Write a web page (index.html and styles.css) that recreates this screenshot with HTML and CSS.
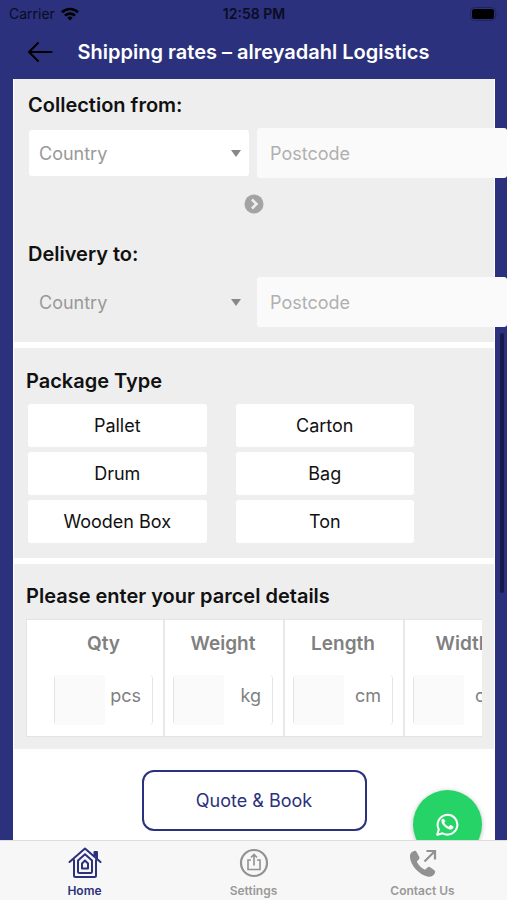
FILE: index.html
```html
<!DOCTYPE html>
<html lang="en">
<head>
<meta charset="utf-8">
<meta name="viewport" content="width=device-width, initial-scale=1">
<title>Shipping rates – alreyadahl Logistics</title>
<link rel="stylesheet" href="styles.css">
</head>
<body>
<header class="top">
  <div class="status">
    <span class="carrier">Carrier
      <svg width="18" height="14" viewBox="0 0 18 14" aria-hidden="true"><g fill="none" stroke="#000" stroke-width="2.6"><path d="M1 5.2a11.5 11.5 0 0 1 16 0"/><path d="M4 8.6a7.2 7.2 0 0 1 10 0"/></g><path d="M9 13.6 6.2 10.8a4 4 0 0 1 5.6 0z"/></svg>
    </span>
    <span class="clock">12:58 PM</span>
    <svg class="battery" width="29" height="14" viewBox="0 0 29 14" aria-hidden="true"><rect x=".5" y=".5" width="25" height="13" rx="4" fill="none" stroke="#20245c"/><rect x="2" y="2" width="22" height="10" rx="2.5"/><path d="M27 4.8q1.6 2.2 0 4.4z" fill="#20245c"/></svg>
  </div>
  <div class="titlebar">
    <button class="back" type="button" aria-label="Back">
      <svg width="26" height="22" viewBox="0 0 26 22" aria-hidden="true"><path d="M24.500 11H2M11 2 2 11l9 9" fill="none" stroke="#000" stroke-width="2" stroke-linecap="round" stroke-linejoin="round"/></svg>
    </button>
    <h1>Shipping rates – alreyadahl Logistics</h1>
  </div>
</header>

<main class="view">
  <form class="card">
    <section class="block route">
      <h2>Collection from:</h2>
      <div class="place">
        <div class="picker">
          <select aria-label="Collection country"><option>Country</option></select>
          <svg width="10" height="7" viewBox="0 0 10 7" aria-hidden="true"><path d="M0 0h10L5 7z" fill="#888"/></svg>
        </div>
        <input class="postcode" type="text" placeholder="Postcode" aria-label="Collection postcode">
      </div>
      <div class="direction">
        <svg width="20" height="20" viewBox="0 0 20 20" aria-hidden="true"><circle cx="10" cy="10" r="9.500" fill="#a3a3a3"/><path d="m8 5.500 4.500 4.500L8 14.500" fill="none" stroke="#eee" stroke-width="2.600"/></svg>
      </div>
      <h2>Delivery to:</h2>
      <div class="place">
        <div class="picker plain">
          <select aria-label="Delivery country"><option>Country</option></select>
          <svg width="10" height="7" viewBox="0 0 10 7" aria-hidden="true"><path d="M0 0h10L5 7z" fill="#888"/></svg>
        </div>
        <input class="postcode" type="text" placeholder="Postcode" aria-label="Delivery postcode">
      </div>
    </section>

    <section class="block package">
      <h2>Package Type</h2>
      <div class="types">
        <button type="button">Pallet</button>
        <button type="button">Carton</button>
        <button type="button">Drum</button>
        <button type="button">Bag</button>
        <button type="button">Wooden Box</button>
        <button type="button">Ton</button>
      </div>
    </section>

    <section class="block parcel">
      <h2>Please enter your parcel details</h2>
      <div class="scroller">
        <table>
          <thead>
            <tr><th id="qty">Qty</th><th id="weight">Weight</th><th id="length">Length</th><th id="width">Width</th></tr>
          </thead>
          <tbody>
            <tr>
              <td><div class="measure"><input type="text" aria-labelledby="qty"><span>pcs</span></div></td>
              <td><div class="measure"><input type="text" aria-labelledby="weight"><span>kg</span></div></td>
              <td><div class="measure"><input type="text" aria-labelledby="length"><span>cm</span></div></td>
              <td><div class="measure"><input type="text" aria-labelledby="width"><span>cm</span></div></td>
            </tr>
          </tbody>
        </table>
      </div>
    </section>

    <div class="submit"><button type="button">Quote &amp; Book</button></div>
  </form>
  <span class="scrollbar"></span>
  <a class="whatsapp" href="#chat" aria-label="WhatsApp">
    <svg width="23" height="23" viewBox="0 0 24 24" aria-hidden="true"><path d="M1.300 22.700 2.900 17A10.300 10.300 0 1 1 7 21.200z" fill="none" stroke="#fff" stroke-width="2.200" stroke-linejoin="round"/><path d="M8.300 6.400c-.3-.5-.6-.5-1-.5-.5 0-1.600.8-1.600 2.600 0 1.500 1 3 1.800 4 1.400 1.900 3.500 3.700 6 4.500 2.300.8 4.500-.3 4.700-2.500 0-.4 0-.6-.4-.8l-2.400-1.100c-.4-.2-.7-.1-.9.200l-1 1.200c-.2.200-.4.300-.8.100-1.800-.8-3-1.900-4-3.600-.2-.3-.1-.5.100-.7l.8-1c.2-.3.2-.5.100-.8z" fill="#fff"/></svg>
  </a>
</main>

<nav class="tabs">
  <a class="active" href="#home">
    <svg width="34" height="32" viewBox="0 0 34 32" aria-hidden="true"><g fill="none" stroke="#2b317c" stroke-width="2" stroke-linejoin="round" stroke-linecap="round"><path d="M1.500 15 17 1.500 32.500 15"/><path d="M6 13v15.500Q6 30 7.500 30h19q1.500 0 1.500-1.500V13"/><path d="M26.500 8.500V5H29v6" fill="#2b317c"/><path d="M10 24.500V13.500l7-6.200 7 6.200v11q0 1.500-1.500 1.500h-11q-1.500 0-1.500-1.500z"/><path d="M14 21.500v-5L17 13.500l3 3v5z"/></g></svg>
    <span>Home</span>
  </a>
  <a href="#settings">
    <svg width="30" height="32" viewBox="0 0 30 32" aria-hidden="true"><g fill="none" stroke="#929292"><circle cx="15" cy="16" r="13" stroke-width="2.200"/><path d="M12 13H9v9.500h12V13h-3M15 18.500V8M12 10.500 15 7.500l3 3" stroke-width="1.600"/></g></svg>
    <span>Settings</span>
  </a>
  <a href="#contact">
    <svg width="30" height="32" viewBox="0 0 30 32" aria-hidden="true"><path d="M6 4c-3 1-4.500 3-4 6.500C3 19 11 27.500 19.500 29.500c3.500.8 6-.6 7.300-3.300.7-1.500.4-2.400-.8-3.300l-3.500-2.500c-1.300-.9-2.300-.8-3.300.3l-1.500 1.500c-.5.500-1 .4-1.600.1-2.800-1.500-5.300-4-6.900-6.800-.4-.7-.3-1.200.2-1.700l1.400-1.400c.8-.9.900-1.800.2-2.900L8.800 5.200C8 4 7.200 3.600 6 4z" fill="#929292"/><path d="M16.500 14.500 26.500 4.500M18.500 4H27v8.500" fill="none" stroke="#929292" stroke-width="2.200"/></svg>
    <span>Contact Us</span>
  </a>
</nav>
</body>
</html>
```
FILE: styles.css
```css
:root {
  --navy: #2b317c;
  --grey: #eee;
  --field: #fafafa;
}

* { box-sizing: border-box; }

body {
  margin: 0;
  height: 100vh;
  display: flex;
  flex-direction: column;
  background: var(--navy);
  color: #111;
  font-family: Inter, "Liberation Sans", sans-serif;
  font-size: 18px;
}

h1, h2 { margin: 0; }

button, input, select {
  font: inherit;
  color: inherit;
  border: 0;
  border-radius: 3px;
  padding: 0;
}

svg { display: block; }

.status {
  display: grid;
  grid-template-columns: 1fr auto 1fr;
  align-items: center;
  height: 27px;
  padding: 0 8px 0 9px;
  font-size: 14px;
  color: #0a0c22;
}

.carrier {
  display: flex;
  align-items: center;
  gap: 6px;
}

.clock { font-weight: 600; }
.battery { justify-self: end; }

.titlebar {
  display: grid;
  grid-template-columns: 52px 1fr 52px;
  align-items: center;
  height: 52px;
  padding: 0 14px 2px;
}

.back {
  display: grid;
  place-items: center;
  height: 44px;
  background: none;
}

h1 {
  font-size: 20px;
  font-weight: 600;
  color: #fff;
  text-align: center;
  white-space: nowrap;
}

.view {
  position: relative;
  flex: 1;
  min-height: 0;
  overflow: hidden;
  padding: 0 12px 0 13px;
}

.card {
  display: flex;
  flex-direction: column;
  gap: 6px;
  min-height: 100%;
  padding: 0 1px;
  background: #fff;
}

.block { background: var(--grey); }

h2 {
  margin-bottom: 11px;
  font-size: 20px;
  font-weight: 600;
  line-height: 24px;
}

.route { padding: 14px 0 15px 14px; }

.place {
  display: grid;
  grid-template-columns: 220px 1fr;
  align-items: center;
  gap: 8px;
  margin: 0 -13px 0 1px;
}

.picker {
  position: relative;
  height: 46px;
}

.picker select {
  appearance: none;
  width: 100%;
  height: 100%;
  padding: 0 10px;
  background: #fff;
  color: #999;
}

.picker.plain select { background: var(--grey); }

.picker svg {
  position: absolute;
  right: 8px;
  top: 20px;
  pointer-events: none;
}

.postcode {
  width: 100%;
  min-width: 0;
  height: 50px;
  padding: 0 13px;
  background: var(--field);
}

.postcode::placeholder { color: #b0b0b0; }

.direction {
  display: grid;
  justify-content: center;
  padding: 16px 14px 28px 0;
}

.package { padding: 21px 12px 15px; }

.types {
  display: grid;
  grid-template-columns: 1fr 1fr;
  gap: 5px 29px;
  max-width: 388px;
  padding: 0 0 0 2px;
}

.types button {
  height: 43px;
  background: #fff;
}

.parcel { padding: 20px 12px 12px; }

.scroller { overflow: hidden; }

table {
  width: 498px;
  table-layout: fixed;
  border-collapse: separate;
  border-spacing: 0;
  background: #fff;
  border: 1px solid #e4e4e4;
  color: #808080;
}

th, td {
  padding: 0 10px 0 8px;
  border-left: 2px solid #e8e8e8;
}

th {
  width: 120px;
  height: 46px;
  font-size: 19px;
  font-weight: 600;
}

th:first-child {
  width: auto;
}

th:first-child, td:first-child {
  padding-left: 27px;
  border-left: 0;
}

td { height: 70px; }

.measure {
  display: flex;
  justify-content: space-between;
  height: 50px;
  margin-bottom: 2px;
  padding-right: 11px;
  border: solid #e4e4e4;
  border-width: 0 1px;
  border-radius: 4px;
  line-height: 42px;
}

.measure input {
  width: 50px;
  height: 50px;
  background: var(--field);
}

.submit {
  display: flex;
  justify-content: center;
  padding-top: 15px;
}

.submit button {
  width: 225px;
  height: 61px;
  border: 2px solid var(--navy);
  border-radius: 12px;
  background: #fff;
  color: var(--navy);
}

.scrollbar {
  position: absolute;
  right: 3px;
  top: 254px;
  width: 4px;
  height: 260px;
  border-radius: 2px;
  background: #171b47;
}

.whatsapp {
  position: absolute;
  right: 25px;
  bottom: -19px;
  display: grid;
  place-items: center;
  width: 69px;
  height: 69px;
  border-radius: 50%;
  background: #25d366;
  box-shadow: 0 1px 5px #0004;
}

.tabs {
  display: grid;
  grid-template-columns: repeat(3, 1fr);
  height: 60px;
  border-top: 1px solid #ddd;
  background: #f7f7f7;
}

.tabs a {
  display: flex;
  flex-direction: column;
  align-items: center;
  gap: 4px;
  padding-top: 6px;
  color: #999;
  font-size: 12px;
  font-weight: 600;
  line-height: 16px;
  text-decoration: none;
}

.tabs .active { color: var(--navy); }
```
